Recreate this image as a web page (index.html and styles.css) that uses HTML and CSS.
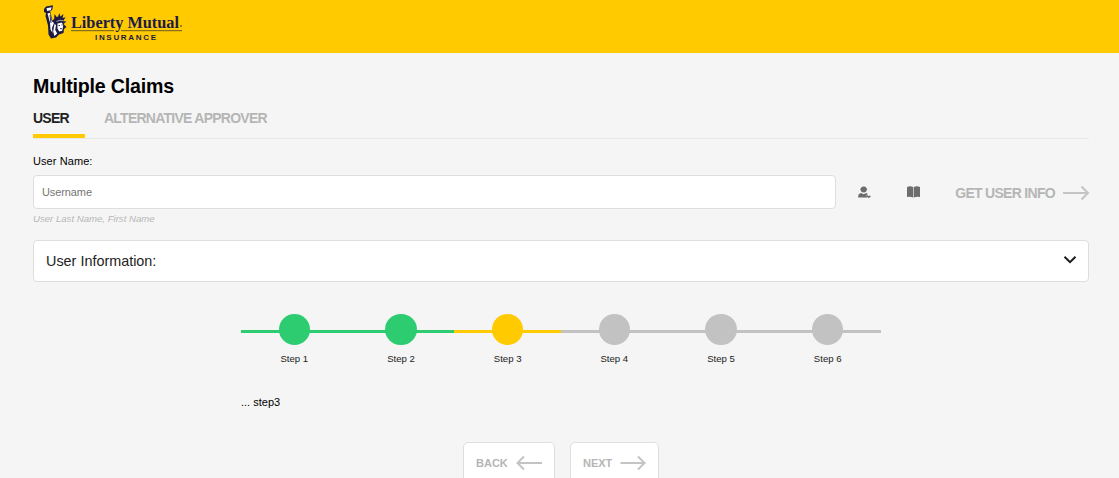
FILE: index.html
```html
<!DOCTYPE html>
<html lang="en">
<head>
<meta charset="utf-8">
<title>Multiple Claims</title>
<link rel="stylesheet" href="styles.css">
</head>
<body>
<header class="header">
  <svg class="logo" width="142" height="38" viewBox="42 4 142 38" role="img" aria-label="Liberty Mutual Insurance">
    <path fill="#1d1b45" d="M44 9l2-2.500 7-1.300-.8 4.800-2 1.300 2 9.200 2-1.500.3-5 2.200 3 1.500-.5 1-3.500 1.300 3.500 3-2.500-1 4 3-.8-2.500 4 3.500.3-3 2.500 3 3-2.500 2-.5 4-4.500 1.500-3 3-5 1-2.500-4-.5-9-2.500-9.500.5-3-2-1z"/>
    <path fill="#fff" d="M46.500 8.200l5-1-.6 3-3.700.8zM47.500 13.500l2.500-.8 1.600 8.300 2.400 2-2 5 .5 5-2-3.500-.5-7zM57.500 23.500l4.500-1 1.200 3.200-1 5-3 .8-1.700-3zM54.500 24l1.500 1-.8 5 2 3.500-2.800 2.500-1.200-4.500z"/>
    <path fill="none" stroke="#1d1b45" stroke-width=".9" d="M50 15l1 8M58.500 25.500h1.500M61.500 25h1M60 28.700h2"/>
    <path fill="none" stroke="#fff" stroke-width=".6" d="M56.500 21.500q3-1.800 6.500-1"/>
    <text class="logo-name" x="71" y="27.500" textLength="108" lengthAdjust="spacingAndGlyphs">Liberty Mutual</text>
    <circle cx="181" cy="26" r=".8" fill="#1d1b45"/>
    <path fill="none" stroke="#5f4d22" stroke-width=".9" d="M71 30.700h43M121 30.700h61"/>
    <text class="logo-sub" x="95" y="40.200" textLength="61">INSURANCE</text>
  </svg>
</header>
<main class="page">
  <h1 class="title">Multiple Claims</h1>
  <nav class="tabs">
    <a class="tab tab-active">USER</a>
    <a class="tab tab-second">ALTERNATIVE APPROVER</a>
  </nav>
  <label class="label" for="username">User Name:</label>
  <div class="user-row">
    <input class="input" id="username" type="text" placeholder="Username">
    <svg class="icon-user" width="14" height="13" viewBox="0 0 14 13" fill="#6d6d6d">
      <circle cx="5.700" cy="3.400" r="3"/><path d="M2.200 2.700h7v1h-7z"/><path d="M.2 11.500V9.800Q.4 7.400 3 7l2.700 1.200L8.300 7l1.400.8-1.300 1.700 1.200 2z"/><path d="M9.400 8.600l1.300 1.600 1.200-.8 1 .8-2 2-2-1.600z"/>
    </svg>
    <svg class="icon-book" width="13" height="12" viewBox="0 0 13 12" fill="#6d6d6d">
      <path d="M0 1Q3-.2 6.200.9v10.500Q3 10.200 0 11zM6.800.9Q10-.2 13 1v10q-3-.8-6.200.4z"/>
    </svg>
    <a class="get-info"><span>GET USER INFO</span>
      <svg width="27" height="16" viewBox="0 0 27 16" class="arrow"><path d="M1 8h25M19.500 1.500L26 8l-6.500 6.500"/></svg>
    </a>
  </div>
  <p class="hint">User Last Name, First Name</p>
  <section class="panel">
    <span>User Information:</span>
    <svg class="chevron" width="14" height="10" viewBox="0 0 14 10"><path d="M1.500 1.800L7 7.100l5.500-5.300" fill="none" stroke="#1b1b1b" stroke-width="2"/></svg>
  </section>
  <section class="wizard">
    <ol class="steps">
      <li class="step done"><i class="dot"></i>Step 1</li>
      <li class="step done"><i class="dot"></i>Step 2</li>
      <li class="step current"><i class="dot"></i>Step 3</li>
      <li class="step"><i class="dot"></i>Step 4</li>
      <li class="step"><i class="dot"></i>Step 5</li>
      <li class="step"><i class="dot"></i>Step 6</li>
    </ol>
    <p class="step-body">... step3</p>
  </section>
  <div class="actions">
    <button class="button back" type="button"><span>BACK</span>
      <svg width="27" height="16" viewBox="0 0 27 16" class="arrow"><path d="M27 8H2.500M9 1.500L2.500 8 9 14.500"/></svg>
    </button>
    <button class="button next" type="button"><span>NEXT</span>
      <svg width="27" height="16" viewBox="0 0 27 16" class="arrow"><path d="M1.500 8h25M19 1.500L25.500 8 19 14.500"/></svg>
    </button>
  </div>
</main>
</body>
</html>
```
FILE: styles.css
```css
* { box-sizing: border-box; }
html { overflow: hidden; }
body {
  margin: 0;
  height: 478px;
  overflow: hidden;
  background: #f5f5f5;
  color: #000;
  font-family: "Liberation Sans", Arial, sans-serif;
}
.header { height: 53px; padding: 4px 0 0 42px; background: #ffca00; }
.logo { display: block; }
.logo-name { font: bold 16.5px "Liberation Serif", serif; fill: #1d1b45; }
.logo-sub { font: bold 8px "Liberation Sans", sans-serif; fill: #1d1b45; }
.page { padding: 21px 30px 0 33px; }
.title { margin: 0; font-size: 19.6px; line-height: 24px; letter-spacing: -0.19px; }
.tabs { display: flex; gap: 19px; height: 41px; border-bottom: 1px solid #e8e8e8; }
.tab { height: 40px; padding-top: 12px; font-size: 14px; line-height: 16px; letter-spacing: -0.75px; font-weight: bold; color: #b5b5b5; white-space: nowrap; }
.tab-active { width: 52px; color: #222; border-bottom: 4px solid #ffca00; }
.label { display: block; margin-top: 15px; font-size: 11px; line-height: 14px; letter-spacing: 0.08px; }
.user-row { display: flex; align-items: center; height: 34px; margin-top: 7px; }
.input {
  width: 803px;
  height: 34px;
  padding: 0 8px;
  border: 1px solid #dedede;
  border-radius: 4px;
  background: #fff;
  font: 11px "Liberation Sans", Arial, sans-serif;
  letter-spacing: -0.1px;
}
.input::placeholder { color: #757575; opacity: 1; }
.icon-user { margin-left: 22px; }
.icon-book { margin-left: 35px; }
.get-info { display: flex; align-items: center; gap: 7px; margin-left: auto; margin-top: 2px; font-size: 14px; line-height: 16px; letter-spacing: -0.7px; font-weight: bold; color: #b5b5b5; white-space: nowrap; }
.arrow { display: block; flex: none; fill: none; stroke: #c4c4c4; stroke-width: 2; overflow: visible; }
.hint { margin: 4px 0 0; font-size: 9.6px; line-height: 12px; font-style: italic; color: #b5b5b5; }
.panel {
  display: flex;
  align-items: center;
  justify-content: space-between;
  height: 42px;
  margin-top: 15px;
  padding: 0 11px 0 12px;
  border: 1px solid #dedede;
  border-radius: 4px;
  background: #fff;
  color: #222;
  font-size: 14.4px;
}
.chevron { margin-bottom: 2px; }
.wizard { width: 640px; margin: 32px 0 0 208px; }
.steps { display: flex; margin: 0; padding: 0; list-style: none; }
.step {
  flex: 1;
  display: flex;
  flex-direction: column;
  align-items: center;
  background: linear-gradient(#c2c2c2, #c2c2c2) 0 16px / 100% 3px no-repeat;
  color: #222;
  font-size: 9.6px;
  line-height: 12px;
}
.dot { width: 31.5px; height: 31px; margin-bottom: 8px; border-radius: 50%; background: #c2c2c2; }
.done { background-image: linear-gradient(#2ecc71, #2ecc71); }
.done .dot { background: #2ecc71; }
.current { background-image: linear-gradient(#ffca00, #ffca00); }
.current .dot { background: #ffca00; }
.step-body { margin: 30px 0 0; font-size: 11px; line-height: 14px; }
.actions { display: flex; gap: 15px; margin: 33px 0 0 430px; }
.button {
  display: flex;
  align-items: center;
  justify-content: space-between;
  height: 42px;
  padding: 0 12px;
  border: 1px solid #dedede;
  border-radius: 5px;
  background: #fff;
  color: #b5b5b5;
  font: bold 11px "Liberation Sans", Arial, sans-serif;
}
.back { width: 92px; }
.next { width: 89px; }
```
